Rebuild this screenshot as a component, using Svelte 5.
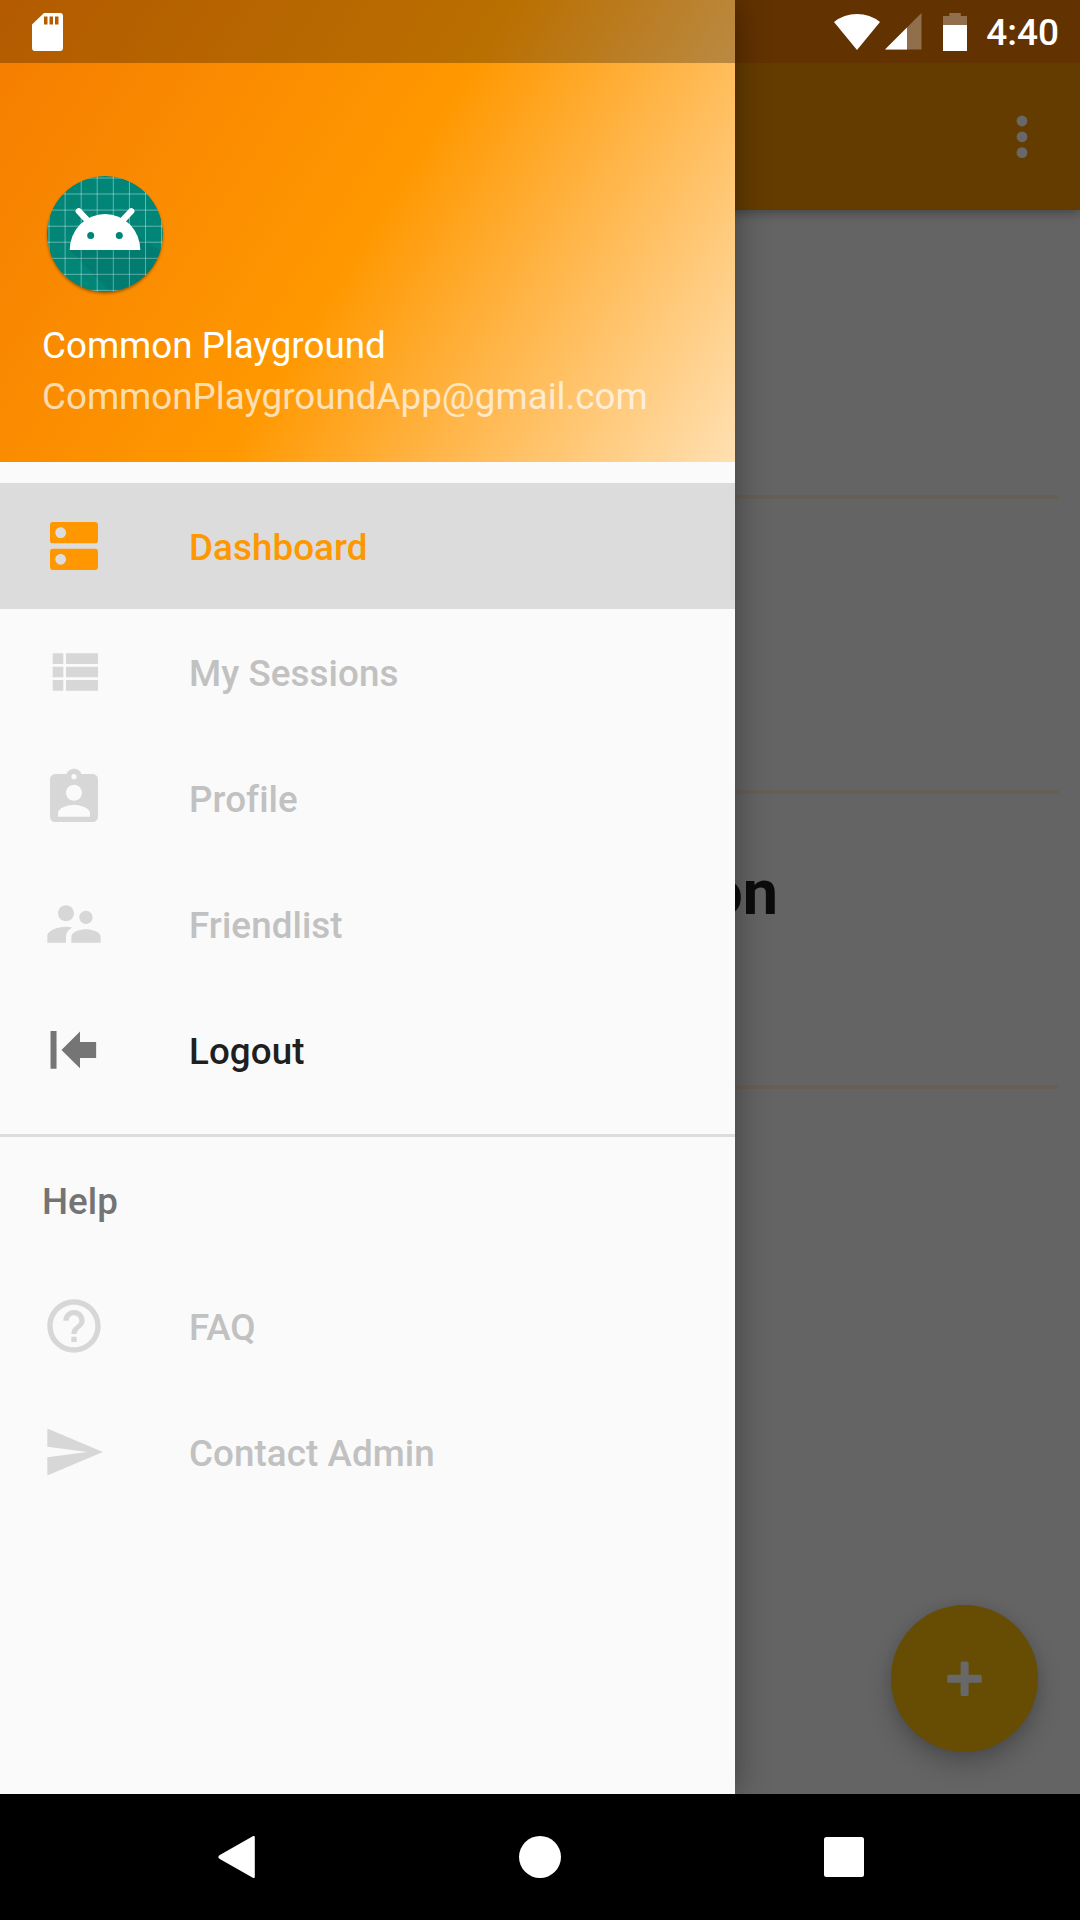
<script lang="ts">
  type Item = { label: string; icon: string; state?: string };

  const icons: Record<string, string> = {
    dns: 'M20 13H4c-.55 0-1 .45-1 1v6c0 .55.45 1 1 1h16c.55 0 1-.45 1-1v-6c0-.55-.45-1-1-1zM7 19c-1.1 0-2-.9-2-2s.9-2 2-2 2 .9 2 2-.9 2-2 2zM20 3H4c-.55 0-1 .45-1 1v6c0 .55.45 1 1 1h16c.55 0 1-.45 1-1V4c0-.55-.45-1-1-1zM7 9c-1.1 0-2-.9-2-2s.9-2 2-2 2 .9 2 2-.9 2-2 2z',
    list: 'M4 14h4v-4H4v4zm0 5h4v-4H4v4zM4 9h4V5H4v4zm5 5h12v-4H9v4zm0 5h12v-4H9v4zM9 5v4h12V5H9z',
    badge: 'M19 3h-4.18C14.4 1.84 13.3 1 12 1c-1.3 0-2.4.84-2.82 2H5c-1.1 0-2 .9-2 2v14c0 1.1.9 2 2 2h14c1.1 0 2-.9 2-2V5c0-1.1-.9-2-2-2zm-7 0c.55 0 1 .45 1 1s-.45 1-1 1-1-.45-1-1 .45-1 1-1zm0 4c1.66 0 3 1.34 3 3s-1.34 3-3 3-3-1.34-3-3 1.34-3 3-3zm6 12H6v-1.4c0-2 4-3.1 6-3.1s6 1.1 6 3.1V19z',
    people: 'M16.5 12c1.38 0 2.49-1.12 2.49-2.5S17.88 7 16.5 7C15.12 7 14 8.12 14 9.5s1.12 2.5 2.5 2.5zM9 11c1.66 0 2.99-1.34 2.99-3S10.66 5 9 5C7.34 5 6 6.34 6 8s1.34 3 3 3zm7.5 3c-1.83 0-5.5.92-5.5 2.75V19h11v-2.25c0-1.83-3.67-2.75-5.5-2.75zM9 13c-2.33 0-7 1.17-7 3.5V19h7v-2.25c0-.85.33-2.34 2.37-3.47C10.5 13.1 9.66 13 9 13z',
    logout: 'M3.2 4.9h2.25V19H3.2zM7.3 12l6.95-6.9v3.9h6.05v6h-6.05v3.85z',
    help: 'M11 18h2v-2h-2v2zm1-16C6.48 2 2 6.48 2 12s4.48 10 10 10 10-4.48 10-10S17.52 2 12 2zm0 18c-4.41 0-8-3.59-8-8s3.59-8 8-8 8 3.59 8 8-3.59 8-8 8zm0-14c-2.21 0-4 1.79-4 4h2c0-1.1.9-2 2-2s2 .9 2 2c0 2-3 1.75-3 5h2c0-2.25 3-2.5 3-5 0-2.21-1.79-4-4-4z',
    send: 'M2.01 20.8L22.8 12 2.01 3.2 2 10l15 2-15 2z',
  };

  const main: Item[] = [
    { label: 'Dashboard', icon: 'dns', state: 'active' },
    { label: 'My Sessions', icon: 'list' },
    { label: 'Profile', icon: 'badge' },
    { label: 'Friendlist', icon: 'people' },
    { label: 'Logout', icon: 'logout', state: 'enabled' },
  ];
  const support: Item[] = [
    { label: 'FAQ', icon: 'help' },
    { label: 'Contact Admin', icon: 'send' },
  ];
  const gridX = [49, 65.1, 81.2, 97.2, 113.3, 129.4, 145.5, 161.6];
  const gridY = [178, 194, 210.1, 226.2, 242.2, 258.3, 274.3, 290.4];
</script>

{#snippet row(item: Item)}
  <li class="item {item.state ?? 'disabled'}">
    <svg viewBox="0 0 24 24"><path d={icons[item.icon]} /></svg>
    <span>{item.label}</span>
  </li>
{/snippet}

<div class="screen">
  <div class="window">
    <section class="page">
      <header class="toolbar">
        <svg class="more" viewBox="0 0 12 44">
          <circle cx="6" cy="6" r="5.4" /><circle cx="6" cy="21.8" r="5.4" /><circle cx="6" cy="37.6" r="5.4" />
        </svg>
      </header>
      <div class="cards">
        <div class="card"></div>
        <div class="card"></div>
        <div class="card"><b>on</b></div>
      </div>
      <button class="fab" aria-label="Add">
        <svg viewBox="0 0 36 36"><rect x="13.6" y=".6" width="8" height="34.5" rx="1.6" /><rect x=".2" y="13.8" width="34.6" height="8" rx="1.6" /></svg>
      </button>
    </section>

    <aside class="drawer">
      <div class="head">
        <svg class="avatar" viewBox="42 171 126 126">
          <defs>
            <clipPath id="disc"><circle cx="105" cy="234" r="58" /></clipPath>
            <filter id="soft" x="-20%" y="-20%" width="140%" height="140%"><feGaussianBlur stdDeviation="1.5" /></filter>
          </defs>
          <circle cx="105" cy="235.8" r="57.6" fill="#000" opacity=".38" filter="url(#soft)" />
          <g clip-path="url(#disc)">
            <circle cx="105" cy="234" r="58" fill="#008577" />
            {#each gridX as x}<path d="M{x} 171V297" stroke="#fff" stroke-opacity=".4" />{/each}
            {#each gridY as y}<path d="M42 {y}H168" stroke="#fff" stroke-opacity=".4" />{/each}
            <path d="M70 250L115 297H190V270L139 237V250z" fill="#000" opacity=".06" />
          </g>
          <path d="M78.7 211.2L88 221M131.3 211.2L122 221" stroke="#fff" stroke-width="6.2" stroke-linecap="round" />
          <path d="M69.7 250a35.3 36 0 0 1 70.6 0z" fill="#fff" />
          <circle cx="90.7" cy="235.5" r="3.5" fill="#008577" /><circle cx="119.3" cy="235.5" r="3.5" fill="#008577" />
        </svg>
        <p class="name">Common Playground</p>
        <p class="mail">CommonPlaygroundApp@gmail.com</p>
      </div>
      <ul>{#each main as item}{@render row(item)}{/each}</ul>
      <h2><span>Help</span></h2>
      <ul class="tail">{#each support as item}{@render row(item)}{/each}</ul>
    </aside>

    <div class="status">
      <svg class="sd" viewBox="0 0 31 38"><path fill-rule="evenodd" d="M12 0H28a3 3 0 0 1 3 3V35a3 3 0 0 1-3 3H3a3 3 0 0 1-3-3V11.5zM12 3.5v8h3.5v-8zM17.5 3.5v8H21v-8zM23 3.5v8h3.5v-8z" /></svg>
      <svg class="wifi" viewBox="0 0 46 36"><path d="M0 8Q10 0 23 0T46 8L23 36z" /></svg>
      <svg class="signal" viewBox="0 0 36.5 36.5"><path d="M36.5 0V36.5H0z" opacity=".3" /><path d="M22 14.5V36.5H0z" /></svg>
      <svg class="battery" viewBox="0 0 24 38"><path d="M6.3 0H17.8V3H24V12H0V3H6.3z" opacity=".3" /><path d="M0 12H24V38H0z" /></svg>
      <time>4:40</time>
    </div>
  </div>

  <nav class="system">
    <svg viewBox="0 0 42 42"><path d="M36.8 1.2v39.6c0 1.2-1 1.500-2 .9L1.800 23q-3-2 0-4L34.800 .3c1-.6 2-.3 2 .9z" /></svg>
    <svg viewBox="0 0 42 42"><circle cx="21" cy="21" r="21" /></svg>
    <svg viewBox="0 0 42 42"><rect x="1" y="1" width="40" height="40" rx="2.5" /></svg>
  </nav>
</div>

<style>
  :global(body) { margin: 0; background: #000; }
  .screen { width: 1080px; height: 1920px; display: flex; flex-direction: column; overflow: hidden; font-family: Roboto, sans-serif; }
  svg { display: block; flex: none; fill: currentColor; }
  p, h2, ul { margin: 0; padding: 0; list-style: none; }

  .window { display: grid; grid-template: 1794px / 1080px; overflow: hidden; }
  .page, .drawer, .status { grid-area: 1 / 1; }

  .page { display: flex; flex-direction: column; background: #646464; }
  .toolbar { box-sizing: border-box; height: 210px; flex: none; display: flex; justify-content: flex-end; align-items: flex-start; padding: 51.5px 52px 0 0; border-top: 63px solid #623200; background: #643c00; box-shadow: 0 3px 10px rgba(0, 0, 0, .3); }
  .more { width: 12px; height: 44px; color: #686868; }
  .cards { flex: 1; padding: 0 21px; }
  .card { box-sizing: border-box; height: 295px; border-bottom: 4px solid #665f56; display: flex; align-items: center; justify-content: flex-end; }
  .card:first-child { height: 289px; }
  .card b { margin-right: 281px; padding-bottom: 93px; font-size: 63px; line-height: 74px; color: #0c0c0c; }
  .fab { align-self: flex-end; margin: 0 42px 42px 0; width: 147px; height: 147px; padding: 0; border: 0; border-radius: 50%; background: #664d03; color: #686868; display: grid; place-items: center; box-shadow: 0 12px 24px rgba(0, 0, 0, .22), 0 1px 12px rgba(0, 0, 0, .08); }
  .fab svg { width: 36px; height: 36px; }

  .drawer { width: 735px; background: #fafafa; box-shadow: 0 0 32px rgba(0, 0, 0, .38); }
  .head { box-sizing: border-box; height: 462px; padding: 171px 42px 0; background: linear-gradient(122.15deg, #f57c00, #ff9800 50%, #ffe0b2); color: #fff; font-size: 36.75px; }
  .avatar { width: 126px; height: 126px; fill: none; }
  .name { margin-top: 23px; line-height: 51px; }
  .mail { line-height: 51px; color: rgba(255, 255, 255, .7); }

  ul { padding: 21px 0; }
  .item { height: 126px; padding-left: 42px; display: flex; align-items: center; gap: 83px; font-size: 36.75px; font-weight: 500; letter-spacing: .08px; }
  .item svg { width: 64px; height: 64px; }
  .item span, h2 span { line-height: 43px; padding-top: 2px; }
  .disabled { color: #c1c1c1; }
  .disabled svg { color: #d7d7d7; }
  .enabled { color: #1f1f1f; }
  .enabled svg { color: #757575; }
  .active { color: #ff9800; background: #dcdcdc; }
  h2 { height: 126px; border-top: 3px solid #dcdcdc; padding-left: 42px; display: flex; align-items: center; font-size: 36.75px; font-weight: 500; color: #747474; }
  .tail { padding: 0; }

  .status { align-self: start; height: 63px; display: flex; align-items: center; color: #fff; background: linear-gradient(90deg, rgba(0, 0, 0, .27) 735px, transparent 735px); }
  .sd { width: 31px; height: 38px; margin: 0 auto 0 32px; }
  .wifi { width: 46px; height: 36px; }
  .signal { width: 36.5px; height: 36.5px; margin-left: 5px; }
  .battery { width: 24px; height: 38px; margin-left: 21.5px; }
  time { margin: 3px 21px 0 19px; font-size: 37px; font-weight: 500; line-height: 44px; }

  .system { flex: 1; display: flex; align-items: center; justify-content: space-between; padding: 0 215px 0 217.5px; background: #000; color: #fff; }
  .system svg { width: 42px; height: 42px; }
  .system svg:nth-child(2) { margin-right: 2.5px; }
</style>
